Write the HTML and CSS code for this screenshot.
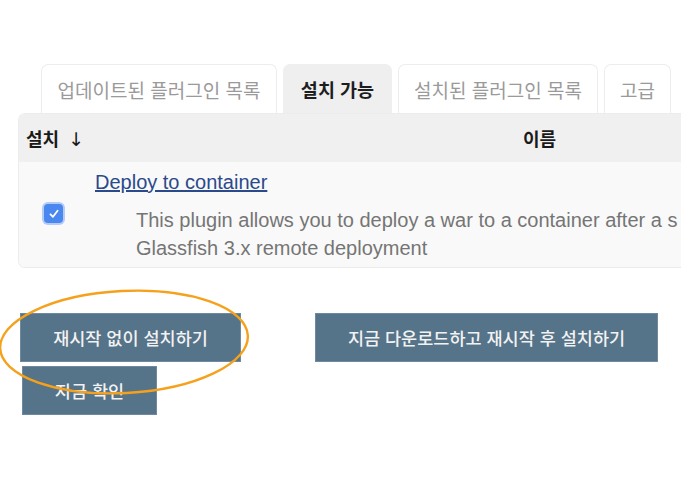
FILE: index.html
```html
<!DOCTYPE html>
<html lang="ko">
<head>
<meta charset="utf-8">
<link rel="stylesheet" href="styles.css">
</head>
<body>
<div class="page">
  <div class="tabs">
    <div class="tab t1">업데이트된 플러그인 목록</div>
    <div class="tab t2 active">설치 가능</div>
    <div class="tab t3">설치된 플러그인 목록</div>
    <div class="tab t4">고급</div>
  </div>
  <div class="table">
    <div class="thead">
      <div class="th-install">설치 <span class="arrow">↓</span></div>
      <div class="th-name">이름</div>
    </div>
    <div class="row">
      <div class="cb-col"><span class="checkbox"><svg width="12" height="12" viewBox="0 0 12 12"><path d="M2.5 6.3 L5 8.8 L9.6 2.8" fill="none" stroke="#fff" stroke-width="1.8" stroke-linecap="round" stroke-linejoin="round"/></svg></span></div>
      <div class="content">
        <a class="plugin-link" href="#">Deploy to container</a>
        <div class="desc">This plugin allows you to deploy a war to a container after a s<br>Glassfish 3.x remote deployment</div>
      </div>
    </div>
  </div>
  <div class="buttons">
    <div class="btn-row">
      <button class="btn b1">재시작 없이 설치하기</button>
      <button class="btn b2">지금 다운로드하고 재시작 후 설치하기</button>
    </div>
    <button class="btn b3">지금 확인</button>
    <svg class="highlight" width="260" height="120" viewBox="0 0 260 120">
      <ellipse cx="126" cy="56" rx="124" ry="51" transform="rotate(-3 126 56)" fill="none" stroke="#f5a11c" stroke-width="2.4"/>
    </svg>
  </div>
</div>
</body>
</html>
```
FILE: styles.css
```css
html, body {
  margin: 0;
  padding: 0;
  background: #fff;
}
body {
  width: 681px;
  height: 485px;
  overflow: hidden;
  font-family: "Liberation Sans", "Noto Sans CJK KR", sans-serif;
}
.page {
  padding-top: 64px;
  position: relative;
}
.tabs {
  display: flex;
  gap: 6px;
  margin-left: 41px;
  height: 49px;
}
.tab {
  box-sizing: border-box;
  height: 49px;
  border: 1px solid #ededed;
  border-bottom: none;
  border-radius: 7px 7px 0 0;
  font-family: "Noto Sans CJK KR", sans-serif;
  font-size: 19px;
  color: #9a9a9a;
  display: flex;
  align-items: center;
  justify-content: center;
  white-space: nowrap;
  flex-shrink: 0;
}
.t1 { width: 236px; }
.t2 { width: 109px; }
.t3 { width: 200px; }
.t4 { width: 67px; }
.tab.active {
  background: #efefef;
  border-color: #efefef;
  color: #1e1e1e;
  font-weight: 700;
  font-size: 18.5px;
}
.table {
  margin-left: 18px;
  width: 700px;
  border: 1px solid #ececec;
  border-right: none;
  border-radius: 7px 0 0 7px;
  overflow: hidden;
}
.thead {
  height: 48px;
  background: #f0f0f0;
  display: flex;
  align-items: center;
  font-family: "Noto Sans CJK KR", sans-serif;
  font-size: 18px;
  font-weight: 700;
  color: #1a1a1a;
}
.th-install {
  padding-left: 7px;
  width: 497px;
  flex-shrink: 0;
}
.arrow {
  font-family: "DejaVu Sans", sans-serif;
  font-weight: 400;
  font-size: 19px;
  margin-left: 4px;
}
.row {
  height: 105px;
  background: #f9f9f9;
  display: flex;
}
.cb-col {
  width: 76px;
  flex-shrink: 0;
  display: flex;
  align-items: flex-start;
  padding-top: 42px;
  box-sizing: border-box;
  padding-left: 25px;
}
.checkbox {
  width: 19px;
  height: 19px;
  border-radius: 4px;
  background: #4a88f0;
  box-shadow: 0 0 0 2px rgba(120, 165, 245, 0.55);
  display: flex;
  align-items: center;
  justify-content: center;
}
.content {
  padding-top: 8px;
  min-width: 0;
}
.plugin-link {
  font-size: 20px;
  color: #2a4a8c;
  text-decoration: underline;
  line-height: 24px;
  display: inline-block;
}
.desc {
  margin-top: 12px;
  margin-left: 41px;
  font-size: 20px;
  line-height: 28px;
  color: #757575;
  white-space: nowrap;
}
.buttons {
  margin-top: 45px;
  position: relative;
  display: flex;
  flex-direction: column;
  gap: 4px;
  align-items: flex-start;
}
.btn-row {
  display: flex;
  gap: 74px;
  margin-left: 20px;
}
.btn {
  height: 49px;
  border: 1px solid #6f8a9e;
  background: #557389;
  color: #f2f2f2;
  font-family: "Noto Sans CJK KR", sans-serif;
  font-size: 17.5px;
  font-weight: 500;
  padding: 0;
  box-sizing: border-box;
}
.b1 { width: 221px; }
.b2 { width: 343px; }
.b3 { width: 135px; margin-left: 22px; }
.highlight {
  position: absolute;
  left: -2px;
  top: -27px;
  overflow: visible;
  pointer-events: none;
}
```
